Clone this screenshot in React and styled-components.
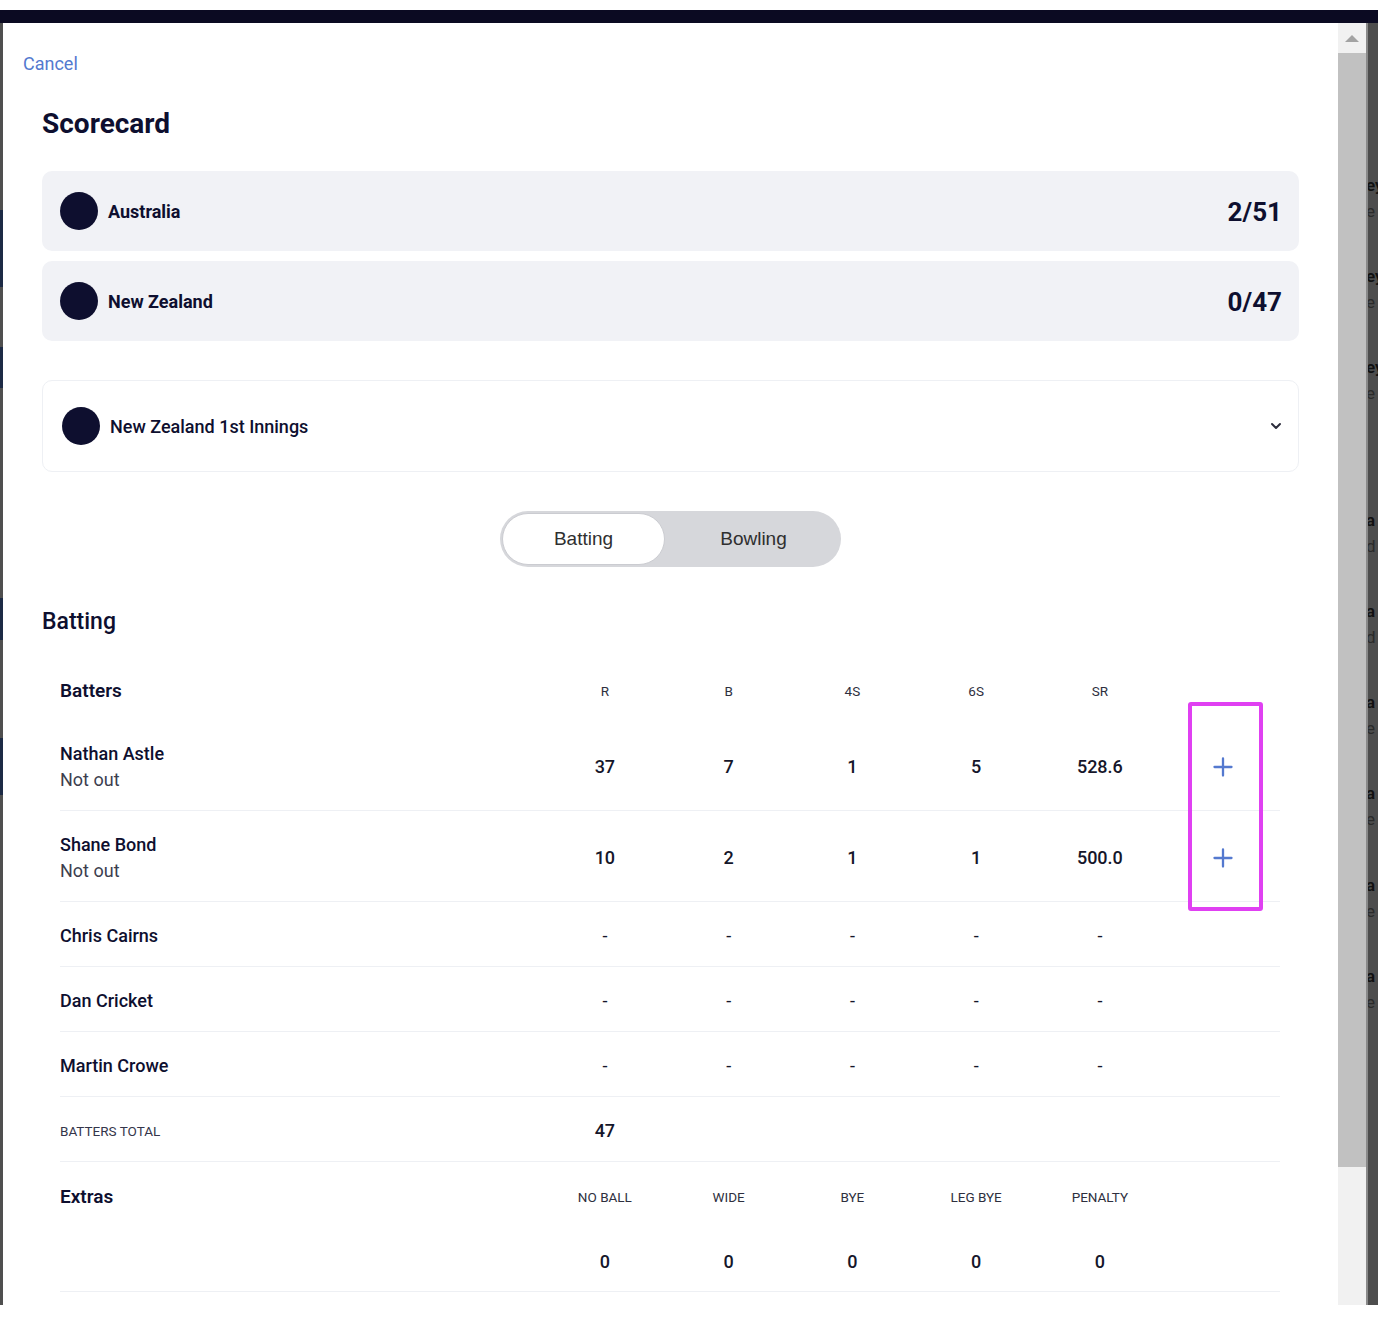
import React from 'react'
import styled, { createGlobalStyle } from 'styled-components'

// Palette
const navy = '#0e0f2f'
const ink = '#14152c'
const cardGrey = '#f1f2f6'
const lineGrey = '#eef0f4'
const linkBlue = '#5479cf'

const GlobalStyle = createGlobalStyle`
  html, body {
    margin: 0;
    padding: 0;
    background: #ffffff;
    font-family: Roboto, "Liberation Sans", sans-serif;
    color: ${ink};
  }
  * { box-sizing: border-box; }
`

// Page frame
const Page = styled.div`
  width: 1386px;
  height: 1326px;
  padding-top: 10px;
  background: #ffffff;
`

const NavBar = styled.div`
  width: 1378px;
  height: 13px;
  background: #0b0a22;
`

const Frame = styled.div`
  display: flex;
  width: 1378px;
  height: 1282px;
`

const LeftEdge = styled.div`
  width: 3px;
  flex-shrink: 0;
  background: linear-gradient(
    #4f4f4f 0 187px, #1d2a45 187px 264px, #4f4f4f 264px 324px,
    #1d2a45 324px 365px, #4f4f4f 365px 575px, #1d2a45 575px 617px,
    #4f4f4f 617px 715px, #1d2a45 715px 772px, #4f4f4f 772px
  );
`

const Modal = styled.div`
  width: 1335px;
  flex-shrink: 0;
  background: #ffffff;
  overflow: hidden;
  padding: 30px 39px 0;
`

const Scrollbar = styled.div`
  width: 28px;
  flex-shrink: 0;
  display: flex;
  flex-direction: column;
  background: #f1f1f1;
`

const ScrollButton = styled.div`
  height: 30px;
  display: flex;
  align-items: center;
  justify-content: center;
  &::before {
    content: '';
    border-left: 7px solid transparent;
    border-right: 7px solid transparent;
    border-bottom: 7px solid #a3a3a3;
  }
`

const ScrollThumb = styled.div`
  height: 1114px;
  background: #c1c1c1;
`

const Backdrop = styled.div`
  width: 12px;
  flex-shrink: 0;
  background: #4d4d4d;
  border-left: 2px solid #8a8a8a;
  overflow: hidden;
  padding-top: 149px;
  display: flex;
  flex-direction: column;
`

const BackdropItem = styled.div`
  height: ${p => p.$h}px;
  flex-shrink: 0;
  margin-left: -2px;
  font-size: 17px;
  line-height: 26px;
  white-space: nowrap;
  color: #111111;
  font-weight: 600;
  & span {
    display: block;
    font-weight: 400;
    color: #2a2a2a;
  }
`

// Modal content
const Cancel = styled.a`
  display: block;
  margin-left: -19px;
  font-size: 18px;
  line-height: 22px;
  color: ${linkBlue};
  cursor: pointer;
`

const Title = styled.h1`
  margin: 32px 0 30px;
  font-size: 28px;
  line-height: 34px;
  font-weight: 700;
  color: ${navy};
`

const TeamList = styled.div`
  display: flex;
  flex-direction: column;
  gap: 10px;
`

const TeamCard = styled.div`
  height: 80px;
  display: flex;
  align-items: center;
  gap: 10px;
  padding: 0 17px 0 18px;
  background: ${cardGrey};
  border-radius: 10px;
`

const Badge = styled.span`
  width: 38px;
  height: 38px;
  border-radius: 50%;
  background: ${navy};
  flex-shrink: 0;
`

const TeamName = styled.span`
  flex: 1;
  font-size: 18px;
  font-weight: 700;
  color: ${navy};
`

const Score = styled.span`
  font-size: 26px;
  font-weight: 700;
  color: ${navy};
  padding-top: 2px;
`

const InningsSelect = styled.div`
  margin-top: 39px;
  height: 92px;
  display: flex;
  align-items: center;
  gap: 10px;
  padding: 0 16px 0 19px;
  border: 1px solid ${lineGrey};
  border-radius: 10px;
`

const InningsName = styled.span`
  flex: 1;
  font-size: 18px;
  font-weight: 500;
  color: ${navy};
`

const ToggleRow = styled.div`
  display: flex;
  justify-content: center;
  margin-top: 39px;
`

const Toggle = styled.div`
  width: 341px;
  height: 56px;
  display: flex;
  align-items: center;
  padding: 2px;
  border-radius: 28px;
  background: #d6d7db;
`

const ToggleOption = styled.button`
  height: 52px;
  flex: ${p => (p.$active ? '0 0 163px' : '1')};
  border: 1px solid ${p => (p.$active ? '#cbccd1' : 'transparent')};
  border-radius: 26px;
  background: ${p => (p.$active ? '#ffffff' : 'transparent')};
  font-family: "Liberation Sans", Arial, sans-serif;
  font-size: 19px;
  color: #2f2f2f;
  padding: 0 0 0 ${p => (p.$active ? '0' : '3px')};
  cursor: pointer;
`

const SectionTitle = styled.h2`
  margin: 41px 0 22px;
  font-size: 23px;
  line-height: 28px;
  font-weight: 500;
  color: ${navy};
`

const Table = styled.div`
  position: relative;
  margin: 0 19px 0 18px;
`

const Row = styled.div`
  display: grid;
  grid-template-columns: 483px repeat(5, 123.75px) 1fr;
  align-items: center;
  height: ${p => p.$h}px;
  padding-top: 3px;
  border-bottom: ${p => (p.$line ? `1px solid ${lineGrey}` : 'none')};
`

const NameCell = styled.div`
  display: flex;
  flex-direction: column;
`

const Name = styled.span`
  font-size: 18px;
  line-height: 26px;
  font-weight: 500;
  color: ${navy};
`

const HeadName = styled.span`
  font-size: 19px;
  line-height: 26px;
  font-weight: 600;
  color: ${navy};
`

const TotalLabel = styled.span`
  font-size: 13.5px;
  line-height: 26px;
  color: #34354a;
  text-transform: uppercase;
`

const Status = styled.span`
  font-size: 18px;
  line-height: 26px;
  color: #3d3e4e;
`

const Label = styled.span`
  text-align: center;
  font-size: 13.5px;
  color: #2e2f3e;
`

const Value = styled.span`
  text-align: center;
  font-size: 18px;
  font-weight: ${p => (p.$dash ? 400 : 500)};
  color: #15162a;
`

const AddCell = styled.span`
  display: flex;
  justify-content: center;
  padding-left: 4px;
  color: ${linkBlue};
`

const Highlight = styled.div`
  position: absolute;
  left: 1128px;
  top: 44px;
  width: 75px;
  height: 209px;
  border: 4px solid #e040f2;
  border-radius: 3px;
  pointer-events: none;
`

const Plus = () => (
  <svg width="20" height="20" viewBox="0 0 20 20" fill="none">
    <path d="M10 1.5v17M1.5 10h17" stroke="currentColor" strokeWidth="2.3" strokeLinecap="round" />
  </svg>
)

const Chevron = () => (
  <svg width="12" height="8" viewBox="0 0 12 8" fill="none">
    <path d="M2 2l4 4 4-4" stroke="#2c2d3c" strokeWidth="2" strokeLinecap="round" strokeLinejoin="round" />
  </svg>
)

const batters = [
  { name: 'Nathan Astle', status: 'Not out', stats: ['37', '7', '1', '5', '528.6'] },
  { name: 'Shane Bond', status: 'Not out', stats: ['10', '2', '1', '1', '500.0'] },
  { name: 'Chris Cairns' },
  { name: 'Dan Cricket' },
  { name: 'Martin Crowe' },
]

const backdropItems = [
  ['ey', 'e', 91], ['ey', 'e', 91], ['ey', 'e', 153], ['a', 'd', 91],
  ['a', 'd', 91], ['a', 'e', 91], ['a', 'e', 92], ['a', 'e', 91], ['a', 'e', 91],
]

const App = () => (
  <Page>
    <GlobalStyle />
    <NavBar />
    <Frame>
      <LeftEdge />

      <Modal>
        <Cancel>Cancel</Cancel>
        <Title>Scorecard</Title>

        <TeamList>
          <TeamCard>
            <Badge />
            <TeamName>Australia</TeamName>
            <Score>2/51</Score>
          </TeamCard>
          <TeamCard>
            <Badge />
            <TeamName>New Zealand</TeamName>
            <Score>0/47</Score>
          </TeamCard>
        </TeamList>

        <InningsSelect>
          <Badge />
          <InningsName>New Zealand 1st Innings</InningsName>
          <Chevron />
        </InningsSelect>

        <ToggleRow>
          <Toggle>
            <ToggleOption $active>Batting</ToggleOption>
            <ToggleOption>Bowling</ToggleOption>
          </Toggle>
        </ToggleRow>

        <SectionTitle>Batting</SectionTitle>

        <Table>
          <Row $h={62}>
            <HeadName>Batters</HeadName>
            {['R', 'B', '4S', '6S', 'SR'].map(l => <Label key={l}>{l}</Label>)}
          </Row>

          {batters.map(b => (
            <Row key={b.name} $h={b.status ? 91 : 65} $line>
              <NameCell>
                <Name>{b.name}</Name>
                {b.status && <Status>{b.status}</Status>}
              </NameCell>
              {(b.stats || ['-', '-', '-', '-', '-']).map((v, i) => (
                <Value key={i} $dash={!b.stats}>{v}</Value>
              ))}
              {b.stats && <AddCell><Plus /></AddCell>}
            </Row>
          ))}

          <Row $h={65} $line>
            <TotalLabel>Batters total</TotalLabel>
            <Value>47</Value>
          </Row>

          <Row $h={66}>
            <HeadName>Extras</HeadName>
            {['No ball', 'Wide', 'Bye', 'Leg bye', 'Penalty'].map(l => (
              <Label key={l}>{l.toUpperCase()}</Label>
            ))}
          </Row>
          <Row $h={64} $line>
            <span />
            {['0', '0', '0', '0', '0'].map((v, i) => <Value key={i}>{v}</Value>)}
          </Row>

          <Highlight />
        </Table>
      </Modal>

      <Scrollbar>
        <ScrollButton />
        <ScrollThumb />
      </Scrollbar>

      <Backdrop>
        {backdropItems.map(([a, b, h], i) => (
          <BackdropItem key={i} $h={h}>{a}<span>{b}</span></BackdropItem>
        ))}
      </Backdrop>
    </Frame>
  </Page>
)

export default App
